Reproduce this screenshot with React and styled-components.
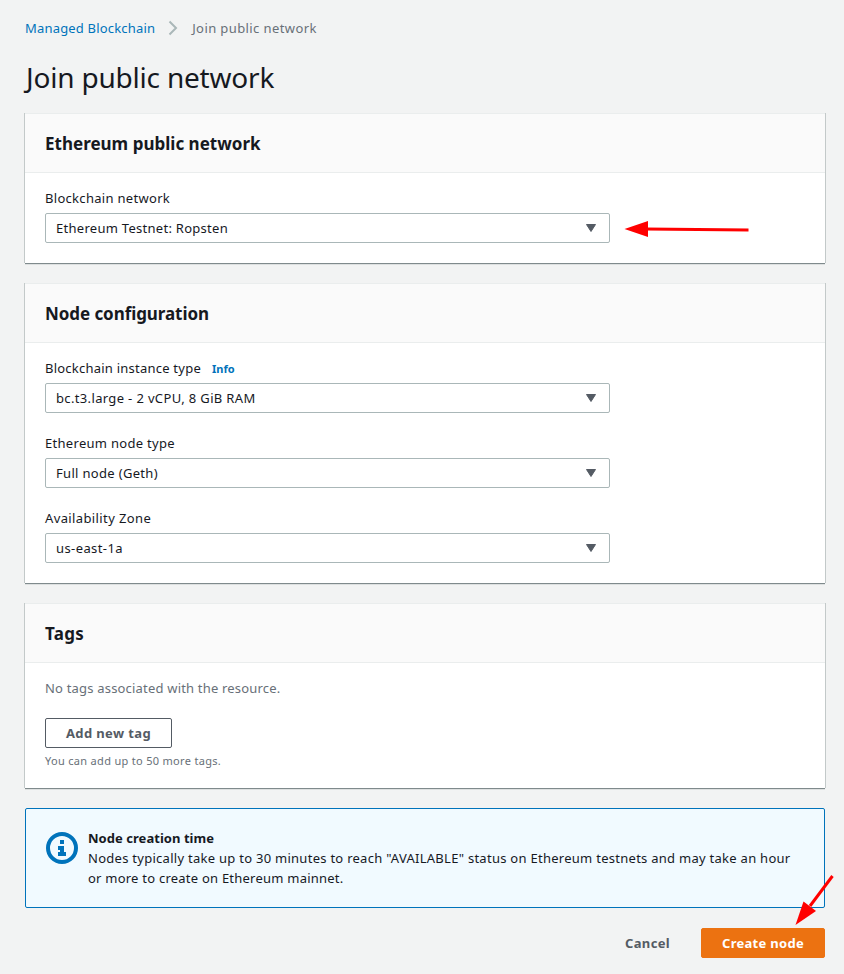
import React from 'react';
import styled, { createGlobalStyle } from 'styled-components';

const GlobalStyle = createGlobalStyle`
  * { box-sizing: border-box; }
  body {
    margin: 0;
    background: #f2f3f3;
    color: #16191f;
    font: 400 13px/20px "Noto Sans", "Open Sans", sans-serif;
  }
`;

const Page = styled.main`
  position: relative;
  width: 844px;
  height: 974px;
  padding: 18px 19px 0 25px;
  overflow: hidden;
`;

const Text = styled.span`
  letter-spacing: ${(p) => p.$track || 0}px;
  white-space: nowrap;
`;

const Breadcrumbs = styled.nav`
  display: flex;
  align-items: center;
  height: 20px;
  color: #687078;
`;

const Crumb = styled.a`
  color: #0073bb;
  letter-spacing: 0.18px;
`;

const Separator = styled.svg`
  width: 10px;
  height: 16px;
  margin: 0 14px 0 13px;
`;

const Title = styled.h1`
  margin: 19px 0 16px;
  padding-left: 1px;
  font-size: 28px;
  font-weight: 400;
  line-height: 40px;
  letter-spacing: -0.2px;
`;

const Panel = styled.section`
  width: 800px;
  margin-bottom: 20px;
  background: #fff;
  border-top: 1px solid #eaeded;
  box-shadow: 0 1px 0 0 #7f8a8c, 0 2px 0 0 #dde0e0, 1px 0 0 0 #c3c9c9, -1px 0 0 0 #c3c9c9;
`;

const PanelHeader = styled.header`
  height: 59px;
  padding: 19px 20px 0;
  background: #fafafa;
  border-bottom: 1px solid #eaeded;
`;

const PanelTitle = styled.h2`
  margin: 0;
  font-size: 17px;
  line-height: 22px;
  font-weight: 700;
`;

const PanelBody = styled.div`
  display: flex;
  flex-direction: column;
  align-items: flex-start;
  gap: 20px;
  padding: 15px 20px 20px;
`;

const FieldGroup = styled.div`
  display: flex;
  flex-direction: column;
  gap: 5px;
`;

const FieldLabel = styled.label`
  display: flex;
  gap: 11px;
  height: 20px;
`;

const InfoLink = styled.a`
  color: #0073bb;
  font-size: 11px;
  font-weight: 700;
  line-height: 21px;
`;

const SelectBox = styled.div`
  display: flex;
  align-items: center;
  justify-content: space-between;
  width: 565px;
  height: 30px;
  padding: 0 13px 0 10px;
  border: 1px solid #aab7b8;
  border-radius: 2px;
`;

const Caret = styled.svg`
  width: 10px;
  height: 8px;
`;

const Muted = styled.p`
  margin: 0;
  color: #687078;
`;

const Hint = styled.p`
  margin: 5px 0 0;
  color: #687078;
  font-size: 11px;
  line-height: 15px;
`;

const Button = styled.button`
  display: block;
  height: 30px;
  padding: 0 20px;
  border: 1px solid ${(p) => (p.$variant === 'normal' ? '#545b64' : p.$variant === 'primary' ? '#ec7211' : 'transparent')};
  border-radius: 2px;
  background: ${(p) => (p.$variant === 'normal' ? '#fff' : p.$variant === 'primary' ? '#ec7211' : 'transparent')};
  color: ${(p) => (p.$variant === 'primary' ? '#fff' : '#545b64')};
  font: 700 13px/20px "Noto Sans", "Open Sans", sans-serif;
  width: ${(p) => p.$width}px;
`;

const TagActions = styled.div`
  display: flex;
  flex-direction: column;
  align-items: flex-start;
`;

const Alert = styled.aside`
  display: flex;
  align-items: flex-start;
  gap: 10px;
  width: 800px;
  height: 100px;
  padding: 19px 20px;
  background: #f1faff;
  border: 1px solid #0073bb;
  border-radius: 2px;
`;

const InfoIcon = styled.svg`
  width: 32px;
  height: 32px;
  margin-top: 4px;
`;

const AlertContent = styled.div`
  display: flex;
  flex-direction: column;
`;

const AlertTitle = styled.strong`
  letter-spacing: 0.04px;
`;

const Footer = styled.footer`
  display: flex;
  justify-content: flex-end;
  gap: 10px;
  width: 800px;
  margin-top: 20px;
`;

const Annotations = styled.svg`
  position: absolute;
  inset: 0;
  pointer-events: none;
`;

function Field({ label, track, value, valueTrack, info }) {
  return (
    <FieldGroup>
      <FieldLabel>
        <Text $track={track}>{label}</Text>
        {info && <InfoLink>Info</InfoLink>}
      </FieldLabel>
      <SelectBox>
        <Text $track={valueTrack}>{value}</Text>
        <Caret viewBox="0 0 10 8">
          <path d="M.5.5h9L5 7.5Z" fill="#545b64" stroke="#545b64" strokeLinejoin="round" />
        </Caret>
      </SelectBox>
    </FieldGroup>
  );
}

function Section({ title, track, children }) {
  return (
    <Panel>
      <PanelHeader>
        <PanelTitle><Text $track={track}>{title}</Text></PanelTitle>
      </PanelHeader>
      <PanelBody>{children}</PanelBody>
    </Panel>
  );
}

export default function App() {
  return (
    <Page>
      <GlobalStyle />
      <Breadcrumbs>
        <Crumb>Managed Blockchain</Crumb>
        <Separator viewBox="0 0 10 16">
          <path d="m1.5 1.5 6.5 6.5-6.5 6.5" fill="none" stroke="#aab7b8" strokeWidth="2" />
        </Separator>
        <Text $track={0.4}>Join public network</Text>
      </Breadcrumbs>
      <Title>Join public network</Title>

      <Section title="Ethereum public network" track={0.01}>
        <Field label="Blockchain network" track={0.3} value="Ethereum Testnet: Ropsten" valueTrack={0.28} />
      </Section>

      <Section title="Node configuration" track={-0.07}>
        <Field label="Blockchain instance type" track={0.23} value="bc.t3.large - 2 vCPU, 8 GiB RAM" valueTrack={0.35} info />
        <Field label="Ethereum node type" track={0.3} value="Full node (Geth)" valueTrack={0.32} />
        <Field label="Availability Zone" track={0.38} value="us-east-1a" valueTrack={0.41} />
      </Section>

      <Section title="Tags" track={0.3}>
        <Muted><Text $track={0.19}>No tags associated with the resource.</Text></Muted>
        <TagActions>
          <Button $variant="normal" $width={127}><Text $track={0.37}>Add new tag</Text></Button>
          <Hint><Text $track={0.31}>You can add up to 50 more tags.</Text></Hint>
        </TagActions>
      </Section>

      <Alert>
        <InfoIcon viewBox="0 0 32 32">
          <circle cx="16" cy="16" r="14" fill="none" stroke="#0073bb" strokeWidth="4" />
          <path d="M14 8h4v4h-4ZM12 14h6v6h2v4h-8v-4h2v-2h-2Z" fill="#0073bb" />
        </InfoIcon>
        <AlertContent>
          <AlertTitle>Node creation time</AlertTitle>
          <Text $track={0.272}>Nodes typically take up to 30 minutes to reach "AVAILABLE" status on Ethereum testnets and may take an hour</Text>
          <Text $track={0.23}>or more to create on Ethereum mainnet.</Text>
        </AlertContent>
      </Alert>

      <Footer>
        <Button $variant="link" $width={87}><Text $track={0.35}>Cancel</Text></Button>
        <Button $variant="primary" $width={124}><Text $track={0.29}>Create node</Text></Button>
      </Footer>

      <Annotations width="844" height="974" viewBox="0 0 844 974">
        <path d="M646 229 748.5 230" stroke="#f00" strokeWidth="3" />
        <path d="M624.5 229 648 221v16Z" fill="#f00" />
        <path d="M810 906 832.5 876" stroke="#f00" strokeWidth="3" />
        <path d="M795.5 925 803.5 901.5 816 911Z" fill="#f00" />
      </Annotations>
    </Page>
  );
}
